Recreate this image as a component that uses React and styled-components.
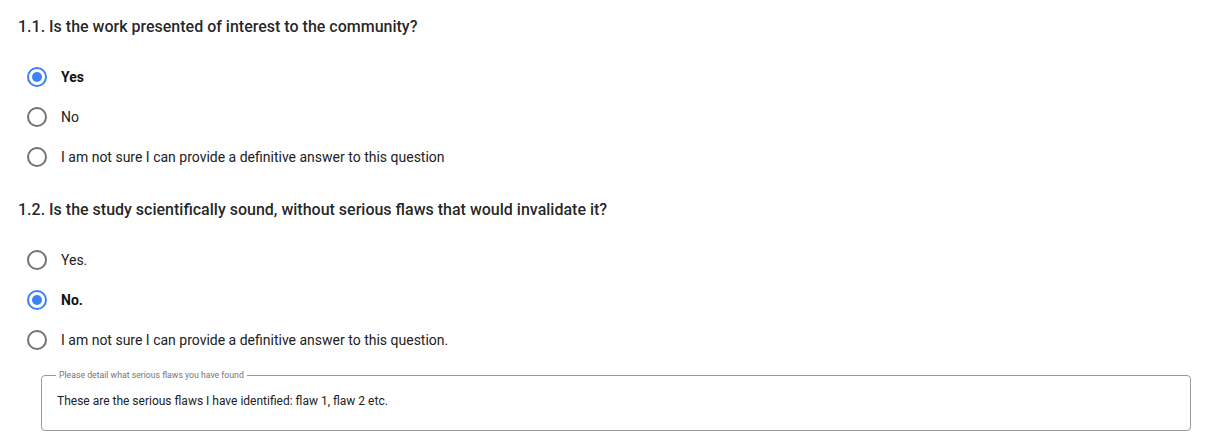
import React from "react";
import styled, { createGlobalStyle } from "styled-components";

const Global = createGlobalStyle`
  html, body { margin: 0; padding: 0; background: #ffffff; }
  body { font-family: Roboto, "Liberation Sans", Arial, sans-serif; color: rgba(0,0,0,0.87); }
`;

const Page = styled.div`
  padding: 17px 15px 0 18px;
  display: flex;
  flex-direction: column;
`;

const Question = styled.section`
  display: flex;
  flex-direction: column;
  margin-bottom: ${(p) => p.$after || 0}px;
`;

const Heading = styled.h3`
  margin: 0 0 20px 0;
  font-size: 16px;
  line-height: 20px;
  font-weight: 500;
  color: rgba(0,0,0,0.87);
`;

const Options = styled.div`
  display: flex;
  flex-direction: column;
`;

const Row = styled.label`
  display: flex;
  align-items: center;
  height: 40px;
  padding-left: 9px;
  gap: 14px;
  cursor: pointer;
`;

const Circle = styled.span`
  box-sizing: border-box;
  width: 20px;
  height: 20px;
  border-radius: 50%;
  border: 2px solid ${(p) => (p.$checked ? "#3b82f6" : "#737373")};
  display: flex;
  align-items: center;
  justify-content: center;
  flex: none;
  &::after {
    content: "";
    width: 10px;
    height: 10px;
    border-radius: 50%;
    background: #3b82f6;
    display: ${(p) => (p.$checked ? "block" : "none")};
  }
`;

const OptionText = styled.span`
  font-size: 14px;
  line-height: 16px;
  font-weight: ${(p) => (p.$checked ? 700 : 400)};
  color: ${(p) => (p.$checked ? "#111" : "#222")};
`;

const Field = styled.fieldset`
  margin: 10px 0 0 23px;
  padding: 13px 16px 21px 15px;
  border: 1px solid #9a9a9a;
  border-radius: 4px;
  min-width: 0;
`;

const Legend = styled.legend`
  font-size: 8.7px;
  line-height: 10px;
  color: #757575;
  padding: 0 3px;
  margin-left: -1px;
`;

const FieldText = styled.div`
  font-size: 12px;
  line-height: 16px;
  color: #222;
`;

function Radio({ label, checked }) {
  return (
    <Row>
      <Circle $checked={checked} />
      <OptionText $checked={checked}>{label}</OptionText>
    </Row>
  );
}

export default function App() {
  return (
    <>
      <Global />
      <Page>
        <Question $after={23}>
          <Heading>1.1. Is the work presented of interest to the community?</Heading>
          <Options>
            <Radio label="Yes" checked />
            <Radio label="No" />
            <Radio label="I am not sure I can provide a definitive answer to this question" />
          </Options>
        </Question>
        <Question>
          <Heading>1.2. Is the study scientifically sound, without serious flaws that would invalidate it?</Heading>
          <Options>
            <Radio label="Yes." />
            <Radio label="No." checked />
            <Radio label="I am not sure I can provide a definitive answer to this question." />
          </Options>
          <Field>
            <Legend>Please detail what serious flaws you have found</Legend>
            <FieldText>These are the serious flaws I have identified: flaw 1, flaw 2 etc.</FieldText>
          </Field>
        </Question>
      </Page>
    </>
  );
}
